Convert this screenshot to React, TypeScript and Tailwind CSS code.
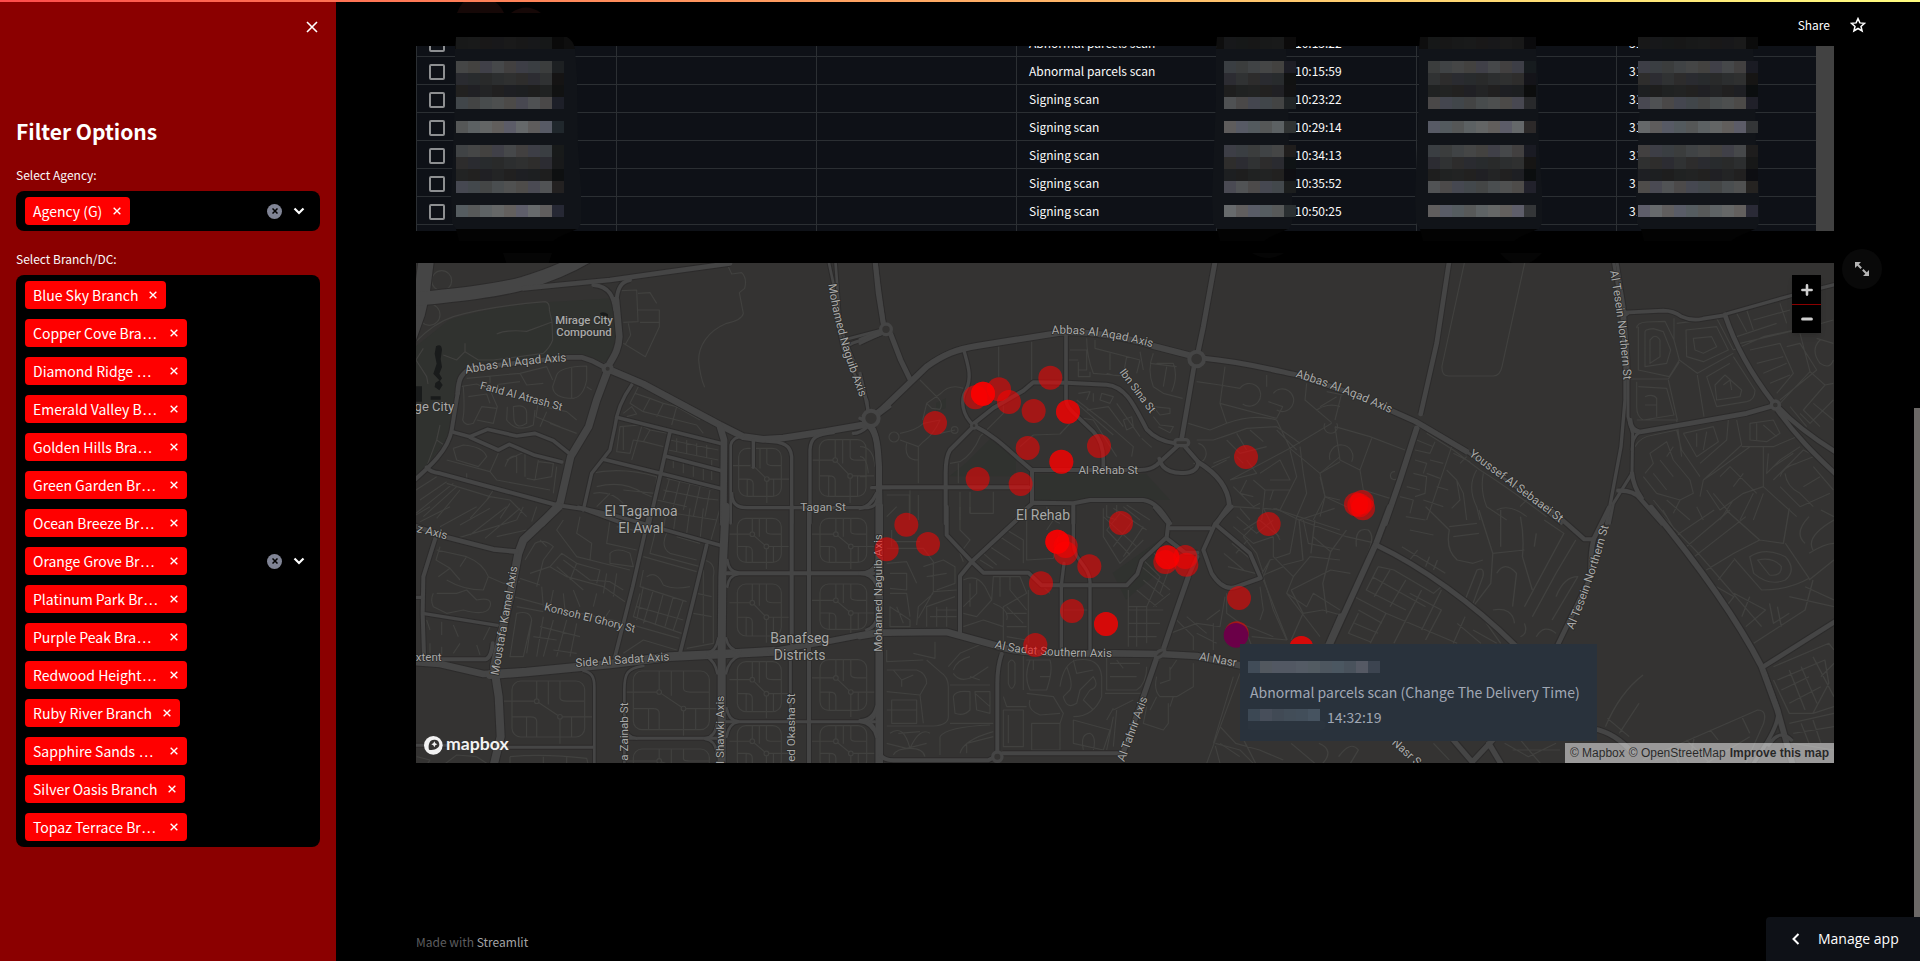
import React from "react";

const SANS = "font-['Noto_Sans_CJK_SC','Open_Sans',sans-serif]";

type Chip = { text: string; cut?: boolean };

const agencies: Chip[] = [{ text: "Agency (G)" }];

const branches: Chip[] = [
  { text: "Blue Sky Branch" },
  { text: "Copper Cove Bra", cut: true },
  { text: "Diamond Ridge ", cut: true },
  { text: "Emerald Valley B", cut: true },
  { text: "Golden Hills Bra", cut: true },
  { text: "Green Garden Br", cut: true },
  { text: "Ocean Breeze Br", cut: true },
  { text: "Orange Grove Br", cut: true },
  { text: "Platinum Park Br", cut: true },
  { text: "Purple Peak Bra", cut: true },
  { text: "Redwood Height", cut: true },
  { text: "Ruby River Branch" },
  { text: "Sapphire Sands ", cut: true },
  { text: "Silver Oasis Branch" },
  { text: "Topaz Terrace Br", cut: true },
];

function Cross({ className, width = 2 }: { className: string; width?: number }) {
  return (
    <svg viewBox="0 0 12 12" className={className} fill="none" stroke="currentColor" strokeWidth={width} aria-hidden="true">
      <path d="M1 1 L11 11 M11 1 L1 11" />
    </svg>
  );
}

function MultiSelect({ id, label, chips }: { id: string; label: string; chips: Chip[] }) {
  return (
    <div className="flex flex-col">
      <label htmlFor={id} className="h-[30px] text-xs leading-7 text-[#fafafa]">
        {label}
      </label>
      <div className="flex items-center rounded-lg bg-black py-1.5 pr-[13px] pl-[9px]">
        <div className="flex min-w-0 flex-1 flex-col items-start gap-2.5">
          {chips.map((chip) => (
            <span
              key={chip.text}
              className={
                "flex h-7 items-center justify-between rounded bg-[#ff0000] pr-2 pl-2 text-sm leading-7 text-white " +
                (chip.cut ? "w-[162px]" : "")
              }
            >
              <span className="whitespace-pre">
                {chip.text}
                {chip.cut && <span className="font-['Liberation_Sans',sans-serif] text-base leading-7">…</span>}
              </span>
              <button type="button" aria-label={"Remove " + chip.text} className="ml-2.5 flex size-2.5 items-center justify-center">
                <Cross className="size-2" width={2} />
              </button>
            </span>
          ))}
        </div>
        <input id={id} type="text" role="combobox" aria-expanded="false" className="h-7 w-4 bg-transparent outline-none" />
        <button type="button" aria-label="Clear all" className="flex size-[15px] items-center justify-center rounded-full bg-[#808495] text-black">
          <Cross className="size-1.5" width={3} />
        </button>
        <button type="button" aria-label="Open" className="ml-[9px] flex size-4 items-center justify-center text-white">
          <svg viewBox="0 0 12 8" className="h-2 w-3" fill="none" stroke="currentColor" strokeWidth="2.2" aria-hidden="true">
            <path d="M1.5 1.5 L6 6 L10.5 1.5" />
          </svg>
        </button>
      </div>
    </div>
  );
}

const scans = [
  { type: "Abnormal parcels scan", time: "10:13:22", code: "31" },
  { type: "Abnormal parcels scan", time: "10:15:59", code: "31" },
  { type: "Signing scan", time: "10:23:22", code: "31" },
  { type: "Signing scan", time: "10:29:14", code: "31" },
  { type: "Signing scan", time: "10:34:13", code: "31" },
  { type: "Signing scan", time: "10:35:52", code: "31" },
  { type: "Signing scan", time: "10:50:25", code: "31" },
];

const cell = "h-7 border-b border-l border-[#2b2f33] px-3 py-0 text-xs leading-6 text-[#fafafa]";

/* Brightness of each 12px band of a redacted column; 0 leaves the backing visible. */
const bands = [24, 0, 64, 44, 32, 72, 0, 92, 0, 64, 44, 32, 74, 0, 94, 0];
const shifts = [
  [0, 4, 6],
  [2, 0, 0],
  [6, 8, 8],
  [-4, -2, 8],
  [4, 2, 0],
  [-8, -2, 2],
  [0, 0, 10],
  [-6, -4, -4],
  [8, 10, 12],
];

function Mosaic({ x, cells, left, right, seed }: { x: number; cells: number; left: number; right: number; seed: number }) {
  const e = right;
  return (
    <g>
      <path
        fill="#111419"
        d={`M${left + 2} 12 L${left + 2} 60 L${left} 110 L${left - 2} 160 L${left - 1} 186 L${left + 3} 192 L${e - 3} 192 L${e} 186 L${e} 150 L${e - 3} 110 L${e - 4} 40 L${e - 6} 12Z`}
      />
      <path fill="#0e0e0e" d={`M${left + 3} 0 H${e - 14} Q${e - 8} 3 ${e - 6} 12 H${left + 2}Z`} />
      <path fill="#030303" d={`M${left + 3} 192 H${e - 4} L${e - 22} 200 L${e - 28} 204 H${left + 6}Z`} />
      {bands.map((level, row) =>
        level === 0
          ? null
          : Array.from({ length: cells + 1 }, (_, i) => {
              const s = shifts[(i * 2 + row + seed) % shifts.length];
              const k = (i === cells ? 0.45 : 1) * level;
              const w = row === 0 ? 0.2 : level / 80;
              const c = (n: number) => Math.round(Math.max(0, k + n * w));
              return <rect key={row + "-" + i} x={x + i * 12} y={row * 12} width="12" height="12" fill={`rgb(${c(s[0])},${c(s[1])},${c(s[2])})`} />;
            }),
      )}
    </g>
  );
}

function ScanTable() {
  return (
    <div className="relative">
      <div className="flex h-[185px] overflow-hidden bg-[#0e1117]">
        <table className="-mt-[17px] w-full table-fixed border-separate border-spacing-0 self-start">
          <tbody>
            {scans.map((s, i) => (
              <tr key={i}>
                <td className={cell}>
                  <input
                    type="checkbox"
                    aria-label={"Select row " + s.time}
                    className="mt-0.5 block size-4 appearance-none rounded-xs border-2 border-[#8d8f91]"
                  />
                </td>
                <td className={cell} />
                <td className={cell} />
                <td className={cell}>{s.type}</td>
                <td className={cell}>
                  <span className="pl-[66px]">{s.time}</span>
                </td>
                <td className={cell} />
                <td className={cell}>{s.code}</td>
              </tr>
            ))}
            <tr>
              {scans.map((s) => (
                <td key={s.time} className={cell} />
              ))}
            </tr>
          </tbody>
        </table>
        <div className="w-[18px] shrink-0 bg-[#424242]" />
      </div>
      <svg viewBox="0 0 1418 228" className="pointer-events-none absolute -top-[9px] left-0 h-[228px] w-full" preserveAspectRatio="xMinYMin meet" aria-hidden="true">
        <Mosaic x={40} cells={8} left={37} right={165} seed={0} />
        <Mosaic x={808} cells={5} left={798} right={876} seed={3} />
        <Mosaic x={1012} cells={8} left={1001} right={1126} seed={5} />
        <Mosaic x={1222} cells={9} left={1222} right={1343} seed={1} />
        <g fill="#050505">
          <path d="M87 216 H136 L132 228 H91Z" />
          <path d="M836 216 H868 Q852 226 836 216Z" />
          <path d="M1084 216 H1126 Q1104 240 1084 216Z" />
        </g>
      </svg>
    </div>
  );
}

/* ---------- Map ---------- */
/* Drawn at three units to the pixel, in six sheets: [width, path]. */
type Road = [number, string];

const roadsNW: Road[] = [
  [46, "M50 -10 L36 100 L22 160 L-10 250"],
  [40, "M10 118 C150 104 260 92 340 70 C420 46 480 20 530 -10"],
  [14, "M340 85 L600 60 L780 35 L960 10"],
  [12, "M550 75 C600 80 610 110 616 150 M660 60 C630 66 622 90 620 120"],
  [20, "M618 120 L628 230 C626 275 606 296 596 316"],
  [14, "M143 400 C146 360 150 345 180 325 L400 300 L470 292 L515 292 L545 302 L584 322"],
  [12, "M143 400 L125 510 C115 570 60 620 0 672"],
  [22, "M592 335 L560 420 L536 500 L482 590 L450 730 L395 790"],
  [20, "M605 332 L700 372 L930 495 L1000 530 L1060 538 L1120 534 L1250 514 L1362 494"],
  [8, "M1255 0 L1270 70 L1275 150 L1300 270 L1372 425 V450 M1276 0 L1282 80 L1290 200 L1330 300"],
  [14, "M1395 0 L1405 80 L1420 190"],
  [9, "M1308 238 L1408 212 M1310 262 Q1320 248 1360 240 L1412 222 M1400 455 L1440 425 M1402 468 L1440 440"],
  [10, "M665 375 C640 410 620 450 615 500 L600 570 L545 640 L520 750"],
  [11, "M620 472 L780 512 L930 550 M580 598 L750 640 L935 686 M765 588 L935 632 M780 515 L750 650 L718 790"],
  [20, "M930 500 L942 540 L940 790"],
  [8, "M962 790 V555 Q968 530 1000 530"],
  [10, "M1145 790 V590 C1142 555 1120 545 1070 543 M1200 790 V570 C1202 530 1220 524 1270 518"],
  [10, "M965 700 C966 735 985 743 1010 743 H1370 C1395 742 1402 730 1404 700"],
  [16, "M1385 500 C1400 520 1408 560 1410 790"],
  [10, "M1030 540 V622 M1385 683 H1440"],
  [11, "M128 516 L180 530 L232 508 L320 528 L375 520 L430 542 L475 578 M180 532 L265 570 L298 553 L375 586 L455 606"],
  [12, "M50 622 Q60 636 90 640 L440 735 L525 748 L640 790"],
];

const roadsSW: Road[] = [
  [24, "M446 -10 L340 90 L325 130 L300 260 L252 470 L266 560 L272 680 L250 770"],
  [14, "M10 46 L110 82 L250 118 L320 125"],
  [12, "M75 88 L40 200 L38 310 L42 435 M10 448 H226 Q244 444 248 400"],
  [10, "M10 262 H34 M38 310 L262 346"],
  [20, "M10 456 L90 462 L220 492 L350 486"],
  [26, "M240 494 L350 486 L600 462 L780 440 L940 432 L1090 424"],
  [18, "M1080 424 L1250 395 L1390 368 L1440 368"],
  [11, "M505 -8 L620 18 L780 64 L930 106 M718 10 L668 230 L615 440 M890 105 L850 270 L810 430"],
  [24, "M947 -10 L937 200 L935 430 V770"],
  [12, "M950 190 H1390 M1145 -10 V400 M1197 -10 V770"],
  [22, "M1408 -10 V770"],
  [9, "M1141 450 V632 M948 635 H1395"],
  [8, "M520 482 C545 488 553 500 553 530 V770 M700 468 C652 474 643 490 643 540 V770"],
  [9, "M650 685 H920 M290 712 H550 M10 706 H120"],
  [8, "M952 150 Q956 186 985 188 M952 230 Q956 196 985 192 M1400 150 Q1396 186 1370 188 M1400 230 Q1396 196 1370 192"],
  [8, "M948 385 Q955 420 990 425 M925 385 Q918 425 890 430 M948 490 Q956 450 990 436 M922 490 Q916 455 890 440"],
  [8, "M950 595 Q956 632 985 634 M950 680 Q956 640 985 636 M1400 595 Q1396 632 1370 634 M1400 680 Q1396 640 1370 636"],
  [8, "M920 645 Q914 682 885 685 M645 650 Q650 682 680 685 M920 725 Q914 690 885 687"],
];

const roadsN: Road[] = [
  [15, "M45 0 L55 100 L70 192 M92 222 L122 300 L152 362"],
  [9, "M0 238 L64 212 M0 250 Q20 240 66 220"],
  [18, "M52 462 L200 320 C250 284 290 268 350 258 L600 218 C690 212 800 232 880 258 L985 285"],
  [15, "M1066 0 L1030 200 L1014 276 M1030 295 C1150 306 1240 330 1320 347 L1450 392"],
  [14, "M1002 320 L985 420 L965 536"],
  [12, "M955 556 L890 615 Q870 630 840 630 H515 L480 600 C440 565 400 525 342 497"],
  [10, "M342 497 C306 466 300 420 318 390 C338 350 322 310 312 272"],
  [12, "M340 500 L270 570 Q257 590 257 640 V790"],
  [12, "M342 490 L400 444 L490 392 L520 367 L620 368 L740 374 C800 380 824 440 860 508 C880 530 910 545 945 550"],
  [11, "M618 225 V420 Q620 440 640 458 L700 515 Q730 545 730 600 V628"],
  [12, "M66 682 H505 M516 630 V728"],
  [12, "M500 745 L520 728 L640 730 L690 720 H850 C890 726 910 760 930 790 M640 730 V790"],
  [18, "M30 500 C50 520 54 560 57 620 V790"],
  [12, "M898 596 C906 636 950 642 980 638 C1010 634 1016 615 1014 605 L975 560"],
  [14, "M1014 606 C1080 646 1105 690 1108 735 L1070 790"],
  [10, "M0 475 L10 480 M22 500 Q0 520 -20 520 M0 745 Q30 742 50 700"],
  [10, "M0 340 L18 420 L24 448"],
];

const roadsS: Road[] = [
  [22, "M58 -10 V770"],
  [12, "M260 -10 V75 L335 155 L370 188 H505 L545 226 H800 L832 192 L845 152 L920 82 L925 40 L885 -8 M335 155 L472 28 M335 155 L300 198 V368"],
  [10, "M640 -10 V100 C640 150 690 170 690 215 V424 M612 160 L604 225 V420"],
  [20, "M0 378 L60 368 L260 366 L400 404 C470 430 540 432 760 430 L900 432 L1010 438 L1150 468"],
  [12, "M930 55 H1050 M1115 -10 L1065 42 L1030 120 L1055 190 Q1090 246 1130 230 L1202 204 L1170 130 L1065 42 M920 85 L975 128 L1012 128 M1012 140 L985 200"],
  [15, "M985 200 L950 300 L912 412"],
  [16, "M888 450 L850 560 L785 740"],
  [12, "M790 730 H428 M425 432 Q412 470 412 520 V728 M62 735 Q70 750 100 751 H385 L402 742"],
  [10, "M20 360 Q48 350 52 320 M0 190 Q35 190 50 160 M0 190 Q35 190 50 225 M0 632 Q40 630 50 590 M0 634 Q40 640 50 680"],
  [16, "M1442 318 L1405 402"],
];

const roadsNE: Road[] = [
  [14, "M388 0 L350 250 L302 462"],
  [16, "M200 446 L286 484 L440 575"],
  [9, "M440 575 L600 690 L724 790"],
  [17, "M290 505 L240 660 L195 790"],
  [10, "M880 0 L905 150 L915 300 V420 L903 560 L860 790"],
  [9, "M890 0 L912 140 L924 300 V470 L938 520 L936 640 L880 730 L868 790"],
  [14, "M930 480 Q932 512 960 516 L1110 490 L1280 460 L1360 437"],
  [11, "M912 158 L1030 152 Q1060 152 1085 170 Q1115 184 1150 176 L1212 166"],
  [10, "M1218 162 L1420 105 L1550 72"],
  [14, "M1215 165 C1250 270 1300 350 1358 425"],
  [14, "M1378 445 Q1440 510 1550 578 M1372 450 C1430 530 1480 580 1550 645"],
  [13, "M895 692 Q940 690 960 715 L1026 790 M936 640 Q940 680 965 715"],
  [8, "M960 516 Q936 530 936 570 M905 145 L920 158 M908 172 L925 160"],
];

const roadsSE: Road[] = [
  [15, "M430 -10 L395 100 L276 410"],
  [14, "M395 105 C510 170 640 280 745 404"],
  [12, "M830 -8 L922 88 H945 M985 -8 L945 88 Q936 130 938 200 L852 410"],
  [15, "M1090 -8 C1200 150 1300 310 1370 470 L1410 600 L1450 770"],
  [13, "M1372 472 L1565 328"],
  [10, "M1378 490 L1412 600 C1416 650 1370 720 1345 770 M1445 690 Q1415 654 1388 705"],
  [14, "M945 656 Q1000 668 1045 730 M590 690 L638 756 M690 690 L638 756 M680 700 L715 770"],
];

const lanesNW =
  "M18 245 Q70 190 130 170 Q230 140 405 125 Q420 128 418 150 L426 185 L428 240 Q420 262 400 280 L250 300 L205 300 L165 275 V250 M260 222 Q290 208 350 214 L426 186 M165 275 L140 300 L100 285 M955 20 L965 42 L995 38 Q1012 55 1004 85 L988 98 L1000 160 Q996 180 950 190 C890 215 866 260 866 300 Q870 350 884 382 " +
  "M635 92 L680 90 L684 185 L640 187 M684 100 L720 98 L740 130 M684 150 H748 V200 L706 290 L640 250 M690 187 H750 M655 190 L662 225 L645 255 " +
  "M440 345 Q450 320 530 318 V360 Q520 410 490 415 Q430 415 428 380Z M485 320 V415 M530 380 L545 390 M170 355 L330 340 L350 375 L400 370 M240 350 V370 M330 340 L410 320 L428 360 M260 374 L330 365 " +
  "M160 380 Q165 450 158 480 Q165 500 190 490 L215 440 L260 445 M175 410 L230 402 L240 430 M150 380 L200 372 L240 390 L262 440 L250 490 L200 480 M310 440 Q350 430 350 460 V490 Q320 510 312 480Z M292 440 L290 480 Q320 520 370 495 L375 450 M385 425 L378 470 L450 500 M400 440 L470 455 L500 480 M420 490 L500 520 M410 455 L390 500 " +
  "M640 460 L665 440 L680 462 L650 470 M675 400 L720 415 L700 452 M720 415 L760 430 L740 470 M760 430 L800 440 L785 495 M685 380 L660 430 L700 455 L860 495 L880 520 M800 440 L870 480 " +
  "M630 500 L690 495 L720 510 L700 545 L670 540 L660 580 L620 575Z M640 500 V570 M695 500 L665 600 M700 545 L760 560 M720 510 L775 520 M780 540 L925 570 M775 570 L925 600 M800 535 V575 M830 540 V580 M860 550 V585 M890 555 V595 M790 600 V625 M820 605 V640 M850 610 V650 M880 620 V660 M905 600 V660 " +
  "M540 640 Q640 620 740 650 L735 700 L640 690 M560 680 Q640 660 700 700 L725 710 M550 700 Q600 690 640 730 M560 740 L600 700 M770 655 L920 690 M760 690 L880 715 L925 720 M780 650 L760 720 M810 660 L790 740 M840 670 L820 750 M870 680 L850 770 M900 690 L885 770 M740 720 L830 740 M730 750 L920 780 " +
  "M130 565 L160 555 Q220 560 230 590 L205 620 L140 600Z M110 600 L240 635 L265 580 M290 600 L345 575 M285 620 Q300 580 320 590 V640 M345 575 V650 M385 600 L375 660 L350 655 M240 635 L260 660 L420 690 M385 605 L430 610 L425 650 L370 660 M440 620 L430 700 M170 640 V660 " +
  "M18 690 L80 650 M30 720 L110 665 M18 760 L130 670 M40 770 L140 680 M80 775 L150 690 M110 670 L240 710 L180 775 M240 710 L300 720 L350 770 M250 690 L230 720 M300 730 L270 775 M340 740 L320 780 M380 740 L365 785 " +
  "M40 265 L18 300 L50 350 L54 372 M90 495 L80 540 L50 620 M80 540 L110 560";

const lanesSW =
  "M0 25 L60 -10 M30 35 L120 -10 M90 50 L200 -10 M150 45 L240 -5 M180 75 L290 -10 M225 85 L330 -5 M140 85 L320 30 M260 80 L350 60 " +
  "M80 120 L170 140 Q220 160 235 200 L220 240 Q160 240 110 210 M90 110 L78 150 L120 175 L150 210 M170 140 L150 170 M70 250 Q60 270 70 290 L110 310 L160 300 Q230 320 240 290 Q250 260 200 270 L170 240 L140 250 L80 250 M60 140 L50 180 M120 175 L85 200 M235 200 L280 220 L330 215 " +
  "M50 330 L60 360 M95 335 V375 M130 345 L145 380 M60 400 V430 M95 410 V435 M150 400 L130 430 M200 405 L210 435 M240 350 L220 390 " +
  "M345 150 L375 100 Q400 85 430 110 L400 150 L380 230 M360 190 L420 170 L470 200 L580 230 L645 275 M420 170 L455 130 L500 160 L570 180 L560 220 M500 160 L480 210 M460 30 L440 60 L500 140 L660 180 M510 20 L500 70 L545 100 L540 150 M410 110 L390 90 M440 170 L520 240 M460 150 L540 210 L600 215 L640 240 M590 190 L580 250 M620 190 L610 260 M395 230 L400 290 M430 240 L420 290 M460 250 L465 300 M490 240 L510 290 M330 205 L390 225 M560 250 L550 290 M310 260 L420 290 L650 340 L808 385 M320 290 L400 305 M600 300 L580 330 " +
  "M600 30 L590 100 L680 120 M620 50 L690 65 M600 130 Q620 110 660 130 L670 170 L600 160Z M740 50 L720 130 L870 170 M770 70 Q750 110 780 130 L860 150 M800 80 L870 100 M700 140 L860 185 M710 200 Q740 180 760 225 Q790 240 840 230 M700 180 L690 230 L830 275 M690 250 L670 320 L815 370 M700 230 L680 330 M730 240 L700 340 M760 250 L735 345 M790 260 L765 350 M820 270 L790 360 M680 290 L820 330 M870 150 Q920 150 910 200 V400 L830 415 M860 250 L905 260 M850 310 L905 320 M880 180 V400 M640 430 L700 390 L800 420 " +
  "M320 310 Q360 300 365 330 L340 440 L300 440 Z M365 330 L350 430 M400 320 L380 440 M430 330 L400 440 M370 380 L440 390 M470 330 L440 440 M500 340 L480 440 M390 350 L510 380 M430 420 L500 430 " +
  "M930 -5 L900 100 M770 -5 L760 60 M800 -5 L790 65 M840 -5 L830 70 M880 -5 L870 90 M650 -5 L690 10 M20 740 L60 750 L50 765 M100 765 L140 735 L200 740 L230 760 M300 740 Q400 730 530 745 L535 765 M300 740 V765 M400 740 V765 M470 740 V765";

const lanesN =
  "M416 258 V350 M515 245 V360 M180 360 L235 415 Q250 430 240 448 L215 445 L200 430 L240 402 Q270 370 310 385 M200 430 L188 480 M120 520 Q170 510 190 490 L240 480 Q220 525 190 545 L175 560 L120 540 M140 550 Q130 600 175 600 M175 560 V670 M240 520 L285 510 M430 430 V460 L360 530 Q340 580 300 605 L270 610 M295 610 V670 M630 490 L600 522 L520 525 L480 560 " +
  "M630 270 H680 V330 H655 M655 300 H625 M680 235 Q680 290 700 340 L760 345 M705 240 V265 L840 300 M750 280 V330 M800 290 L790 345 Q770 350 740 340 M840 300 L830 340 M850 330 L840 275 M880 280 Q860 330 880 380 L910 400 L968 415 M890 310 H940 Q955 350 935 395 M920 320 L910 380 M870 310 L950 320 M655 305 V350 H690 V335 M655 400 L690 395 L680 420 M650 430 L760 525 M725 400 L760 410 L750 430 L720 420Z M700 400 L700 425 M680 450 L745 440 L790 500 M640 470 L700 480 L770 590 M650 420 L740 490 L820 560 L815 590 M790 480 L815 470 L820 500 L800 510Z M880 440 L930 445 V460 L900 465Z M880 470 L900 495 L940 500 L930 518 L895 500 M845 535 L875 562 M770 430 L840 530 " +
  "M1010 365 L1080 375 L1140 385 M1095 320 L1080 430 L1100 490 M1080 430 L1250 475 M1140 385 A34 34 0 1 1 1148 432 M1240 400 A34 34 0 1 1 1250 450 M1220 345 V380 M1340 370 L1335 420 L1415 488 M1370 450 A60 45 0 0 1 1440 440 M1250 475 L1268 440 L1225 425 M1250 480 L1290 565 L1380 640 M985 490 L1050 510 L1100 490 Q1180 460 1250 480 M1010 540 L1060 540 Q1120 520 1160 505 L1250 500 L1320 550 M1100 540 L1140 580 L1220 560 M1130 520 L1160 570 M1170 510 L1210 545 M1250 510 L1310 570 M1415 490 L1290 565 M1290 565 L1110 660 M1160 600 L1190 640 L1110 660 M1060 610 L1110 590 M1050 625 L1100 600 M1200 640 L1260 600 L1290 660 L1230 660 M1180 660 L1215 690 L1205 780 M1215 690 H1290 L1310 650 L1290 570 M1240 690 L1230 720 M1330 640 L1340 700 L1310 770 M1380 640 L1395 710 L1360 780 M1380 640 L1440 590 M1395 710 L1440 720 M1160 660 L1140 700 L1180 710 M1120 680 L1180 740 L1200 730 M1120 740 L1200 745 M1290 690 L1260 750 L1210 745 M1320 560 L1330 640 M1130 590 L1150 610 M1015 550 A30 30 0 0 1 1000 610 " +
  "M80 705 H148 V780 M150 690 V760 M175 705 V780 M300 695 V780 M330 695 V760 H400 V695 M740 735 V770 L770 780 M770 735 V760 M790 740 L840 780 M800 735 L870 780 M0 590 Q20 590 25 640 M0 560 Q40 560 45 620 M0 650 H20";

const lanesS =
  "M80 20 L110 -10 M100 95 H180 M80 115 L190 115 L220 155 V245 L175 325 M95 60 V110 M300 -10 V60 L330 90 L300 130 L310 155 M330 -10 V10 M420 80 L480 120 M440 60 L490 90 V160 M390 110 L450 150 M370 130 L410 165 M360 150 L400 175 M500 -10 V150 L580 145 L600 60 M560 -10 Q570 30 600 40 M580 30 L560 60 M730 -5 V80 L780 160 L850 90 M760 -5 L860 60 M730 20 L830 110 M740 60 L810 135 M780 10 L740 60 M820 30 L760 110 M850 50 L790 140 " +
  "M80 160 L140 155 L170 220 M90 190 L140 190 V240 L90 235 M90 250 H140 L150 320 M190 170 L250 150 L285 170 V220 L230 240 M200 200 L260 190 M220 245 L290 240 M90 290 L150 330 V350 L90 350Z M110 290 L130 340 M170 345 L175 290 L220 250 M200 350 V290 L285 260 M230 300 H290 M230 350 V290 M260 350 V290 M210 320 H290 " +
  "M310 210 Q350 190 375 230 L395 270 L350 320 L310 310 M330 220 V290 M350 210 V250 L310 290 M395 270 L400 200 L480 200 L500 250 L430 290 V400 M420 200 V260 M450 200 V240 L500 300 M440 290 L490 340 M310 350 L370 330 L430 350 M400 280 Q450 300 440 330 M440 310 H500 M440 350 H500 M440 380 L500 390 M505 240 V400 M545 225 L570 250 M610 300 H690 " +
  "M805 240 V410 M850 150 L900 200 L860 290 H805 M870 120 L930 170 L900 250 M845 170 L930 240 M880 290 L930 250 M830 240 L890 290 M850 210 L910 260 M805 300 H910 M805 340 H900 M805 380 H890 M830 290 V410 M860 290 V400 M930 370 L1010 340 L1080 350 L1095 260 M950 330 L1000 380 V420 M980 320 L1040 370 M1100 250 L1100 310 L1140 340 M1040 330 L1080 300 M1010 370 L1070 400 M1060 340 V420 " +
  "M80 420 V455 L190 450 M225 395 V445 L160 430 M80 480 H170 Q200 490 200 520 L180 555 L80 545 M100 480 L125 510 L160 495 M125 510 V530 M200 450 L240 485 Q265 500 265 530 V620 Q265 645 220 648 H80 M95 570 H170 V640 H95Z M180 555 L190 640 M80 600 H170 M265 470 L300 430 L370 400 M280 480 Q290 450 330 440 M280 490 Q300 520 340 500 L385 470 M330 500 L360 510 M270 525 H390 M280 560 Q285 540 330 545 V600 Q310 620 285 610Z M345 545 H390 V610 L350 600Z M345 550 L390 590 M270 640 H400 M240 680 Q260 650 390 645 M240 680 V735 M320 730 V700 L400 680 M300 730 Q310 690 400 665 " +
  "M90 670 Q130 640 150 715 Q180 650 210 670 M80 700 L140 715 L200 700 M100 735 Q110 715 150 715 Q190 715 195 740 M115 670 L180 665 M445 460 Q455 440 465 460 V520 Q455 550 445 520Z M430 600 H490 V710 H430Z M445 615 V700 M500 450 H570 Q580 480 560 540 H510 Q490 500 510 450Z M520 450 V480 M540 500 H570 M500 550 L580 560 L610 610 L600 640 M510 570 Q500 600 540 615 L600 610 M515 640 H600 V720 H515Z M430 560 L440 590 L500 590 M490 430 V540 " +
  "M600 530 Q610 460 650 450 Q720 440 725 500 V560 Q700 620 640 620 M620 470 Q640 520 630 540 L610 560 Q620 600 650 580 L660 540 L700 500 Q720 530 690 540 M640 450 L650 490 L700 480 M690 540 L670 570 L700 600 M740 440 V540 H830 Q860 520 860 470 M750 460 H840 M750 500 H830 M770 450 L790 475 M735 550 H850 M760 600 L820 570 M740 630 L760 595 M640 630 L750 660 L730 720 L640 700Z M670 720 Q660 670 690 670 Q710 680 700 720 M760 620 L740 720 M770 600 L760 710 " +
  "M890 500 Q880 540 900 560 H950 L1000 530 V460 M930 470 V510 L900 520 M950 450 L930 480 M860 590 L850 640 L910 660 L925 640 V580 M890 560 L870 600 M940 560 L930 590 M1120 500 L1060 700 M1140 490 L1040 760 M1066 708 L1080 760 M1066 700 L1140 720 M1140 720 L1180 760 " +
  "M1130 20 L1190 70 L1240 30 M1120 50 L1180 100 L1240 80 M1140 -5 L1170 30 M1150 80 L1190 130 L1210 190 M1180 50 L1150 80 M1200 200 L1230 150 L1290 130 M1240 80 L1240 140 L1300 200 L1350 140 L1440 150 M1230 150 L1210 200 L1240 300 L1280 390 M1300 200 L1280 250 L1380 380 M1280 250 L1340 290 L1360 250 L1440 300 M1200 230 L1210 300 L1200 330 M1140 340 L1240 380 M1160 370 L1180 420 M1210 -5 L1260 90 M1310 20 L1290 130 M1240 -5 L1440 60 M1330 30 L1345 100 L1440 120";

const lanesNE =
  "M435 0 L366 318 Q364 348 386 348 H520 Q540 348 546 320 L616 0 " +
  "M950 205 Q950 188 980 186 L1035 184 L1062 240 L1078 300 L1048 350 L955 330 V200 M975 215 Q975 208 1000 206 L1030 215 L1052 270 L1040 310 L975 320Z M1000 230 Q1010 225 1020 240 V290 L990 310 V240Z M925 357 H1045 L1078 306 M1062 175 V240 M1070 190 L1190 175 L1240 270 M1078 300 L1132 340 L1240 280 M1098 210 L1190 200 L1225 270 L1150 305 L1100 290Z M1120 235 L1175 230 L1190 260 L1150 280 L1125 270Z M1132 345 L1152 470 M1045 360 L1072 480 L950 480 M955 380 L1040 385 L1062 465 L970 480 Q950 470 950 440 V365 M975 410 Q1000 400 1010 415 V450 M975 435 H1010 V470 " +
  "M1240 290 L1305 390 Q1305 420 1280 425 L1190 440 L1160 350 L1230 310 M1185 375 L1215 345 L1265 390 L1260 410 L1190 420Z M1210 375 L1230 360 L1235 390 " +
  "M1240 270 L1330 230 L1470 200 M1250 160 L1280 215 M1280 150 L1300 210 M1250 230 L1370 190 M1300 180 L1410 150 M1380 130 L1400 190 M1260 250 L1430 210 L1490 200 M1290 270 L1380 250 L1420 340 L1370 400 M1310 310 L1390 290 M1330 340 L1400 310 M1350 370 L1410 345 M1400 260 L1440 250 L1490 330 L1380 420 M1440 220 L1470 335 L1515 375 L1540 370 M1470 335 L1380 430 M1500 240 Q1470 270 1500 310 Q1530 330 1540 300 M1490 235 L1540 250 M1470 120 V200 L1540 180 M1500 110 V190 M1515 375 L1450 450 L1500 500 M1480 430 L1540 480 M1440 460 L1470 490 L1540 420 M1410 440 L1460 500 " +
  "M945 560 Q960 530 1000 525 L1070 510 L1085 570 L1140 650 M1070 480 L1085 590 M1090 520 L1180 500 L1195 545 L1130 590 L1090 520 M1130 520 V560 M1160 515 L1150 570 M1225 480 L1220 540 L1140 610 M1250 480 L1265 555 L1150 660 L1140 710 M1290 490 L1360 480 L1380 520 L1340 545 L1290 540Z M1310 490 V540 M1330 495 L1370 530 M1265 560 H1360 L1430 530 M1330 560 V680 L1430 770 M1345 580 L1340 640 L1380 600 L1440 560 M1360 660 L1450 570 L1510 600 M1360 620 L1420 580 M1380 650 Q1390 620 1430 610 L1480 590 M1395 640 Q1400 680 1440 700 L1480 740 M1380 680 L1440 740 L1530 700 M1480 620 L1540 690 M1450 680 L1500 650 " +
  "M975 640 L1000 610 L990 580 L1040 545 L1060 600 L1110 660 L1120 700 L1080 720 L1010 700 L970 650 M1020 600 L1060 650 M1000 640 L1040 690 M1060 560 L1040 590 M1150 660 L1180 640 L1290 560 M1200 650 L1230 620 L1310 700 M1160 690 L1200 750 L1270 700 L1330 680 M1180 700 L1230 760 M1270 640 L1240 680 M1130 740 L1150 780 M1300 700 L1260 780 M1240 720 L1200 780 M1040 720 L1110 780 M1000 720 L1040 770 M1080 720 L1060 760 M1330 700 L1300 780 " +
  "M50 410 L0 440 M65 400 L45 480 M20 395 L70 405 M45 500 L150 530 L255 570 M45 500 L60 600 L120 630 L155 535 M30 600 A35 35 0 1 1 95 605 M0 640 L60 605 M120 630 L130 690 L210 715 M0 650 L15 710 L80 740 M15 710 L0 770 M15 490 A20 20 0 1 0 50 490 " +
  "M320 520 L400 570 L480 630 Q560 680 680 770 M290 540 L340 560 M345 545 L330 580 L285 570 M285 600 L320 610 L310 640 M280 640 L320 650 L315 700 L285 710 M260 680 L300 690 M240 710 L280 720 L270 760 M395 560 L320 780 M330 600 L370 610 M320 640 L360 655 M350 680 L385 690 M310 720 L370 740 M400 580 L450 605 M440 590 L420 610 M380 630 L410 660 L420 720 L395 745 M410 660 L430 700 L440 780 M470 630 Q440 680 470 740 L480 780 M490 640 Q480 690 500 740 L560 780 M530 750 Q570 730 620 770 M600 740 L620 720 M225 635 A12 12 0 1 0 235 650";

const lanesSE =
  "M520 -10 L580 60 Q570 120 600 150 L640 160 L665 150 M580 50 L650 40 M590 80 L655 70 M655 0 L690 130 L770 120 M690 130 L685 220 L640 290 M710 0 V110 M760 20 Q770 80 765 140 L790 240 M800 70 L795 110 M820 30 L870 70 L770 290 M900 90 L850 190 L790 320 M470 20 L520 30 M480 60 L540 75 M460 110 L570 190 M480 150 L500 120 M540 180 L550 150 M520 170 L530 140 M700 190 Q720 150 750 190 L740 290 M620 270 L650 180 Q670 170 665 200 L640 280 M850 260 Q870 200 905 200 L840 330 M770 340 Q780 370 760 380 M800 380 Q820 340 850 370 M690 300 Q740 290 745 340 " +
  "M400 170 L440 180 L540 250 L560 230 M400 170 L370 240 L470 300 M385 200 L520 290 M430 180 L390 260 M470 210 L430 290 M510 240 L470 330 M340 260 L420 310 L600 400 M420 310 L380 400 M350 310 L325 370 L380 395 M350 300 L410 340 M340 340 L400 370 M470 330 L440 400 M480 250 L560 300 L520 390 M560 240 L510 360 M620 320 L590 400 M600 340 L660 400 M650 300 L710 400 M640 360 L700 400 " +
  "M200 30 L210 150 L160 165 M200 30 L320 80 L395 100 M240 30 L235 80 L280 125 L320 60 M235 80 L230 130 M280 125 L260 220 L270 310 M160 170 L100 200 M180 240 L280 180 L330 190 M180 240 L210 310 L260 300 L320 320 M210 310 L180 390 M110 210 L170 390 M345 110 Q340 50 375 60 Q395 80 370 140 M80 380 L170 390 M140 -5 L200 30 L290 -5 M60 60 L100 30 L150 80 M10 130 L60 180 M30 100 L80 150 M20 170 L90 190 M70 90 L40 130 " +
  "M1100 -5 L1210 130 L1370 350 M1120 0 L1150 60 M1150 80 L1250 0 M1180 110 L1290 0 M1200 140 L1330 20 M1230 180 L1300 130 L1365 90 L1425 100 L1440 -5 M1300 150 L1260 210 M1365 90 L1280 0 M1300 145 L1370 240 Q1440 240 1490 205 L1430 100 M1340 140 Q1380 110 1430 140 Q1460 180 1430 210 Q1390 230 1350 190Z M1360 150 Q1400 140 1420 170 Q1420 200 1390 195Z M1490 210 L1553 150 M1480 100 Q1450 70 1490 20 M1490 130 Q1530 100 1553 100 M1500 120 Q1480 80 1553 30 M1520 0 L1553 20 M1240 220 L1300 260 L1280 290 M1300 250 L1380 300 L1330 350 M1340 260 L1320 320 M1390 280 L1400 340 L1440 310 M1410 290 L1420 350 M1440 260 L1553 290 M1480 230 L1553 270 M1500 210 L1480 300 L1350 400 " +
  "M1400 470 L1540 400 L1553 420 M1410 510 L1530 450 L1540 520 L1500 610 L1440 610 L1400 510 M1440 480 L1480 600 M1420 540 L1490 500 M1440 580 L1520 530 M1470 470 L1510 580 M1500 440 L1553 560 M1440 640 L1553 610 M1450 670 L1553 650 M1470 640 L1490 700 M1500 630 L1520 700 M1450 700 L1553 720 M1553 460 L1520 500 M1500 610 L1553 590 " +
  "M1070 495 Q1010 550 975 650 M1060 580 L1010 670 M980 625 L1035 680 M1070 750 L1360 600 Q1385 600 1375 640 L1330 760 M1180 690 L1240 760 M1240 660 L1260 690 M1320 620 L1340 670 M1100 750 L1150 740 M1200 680 L1190 740 M1140 710 L1160 760 M1230 760 L1340 680 M180 700 L240 760 M250 700 Q290 720 260 760 M300 740 Q330 690 350 720 L330 760 M0 650 L40 700 L100 720 L160 750 M60 690 L90 760 M0 700 L50 740 M540 700 L580 750 M720 700 L780 740 L850 700 M760 690 L810 760 M740 720 L860 720";

type Sheet = { x: number; y: number; sx?: number; roads: Road[]; lanes: string };

const sheets: Sheet[] = [
  { x: -18, y: -9, roads: roadsNW, lanes: lanesNW },
  { x: -18, y: 741, roads: roadsSW, lanes: lanesSW },
  { x: 1332, y: -9, roads: roadsN, lanes: lanesN },
  { x: 1332, y: 741, roads: roadsS, lanes: lanesS },
  { x: 2712, y: -9, roads: roadsNE, lanes: lanesNE },
  { x: 2412, y: 741, sx: 1.186, roads: roadsSE, lanes: lanesSE },
];

const place = (s: Sheet) => `translate(${s.x} ${s.y}) scale(${s.sx ?? 1} 1)`;

/* Housing quarters: x, y, width, height. */
const quarters = [
  [968, 556, 128, 144],
  [1210, 530, 140, 170],
  [964, 766, 132, 132],
  [1212, 766, 140, 132],
  [964, 963, 132, 156],
  [1212, 963, 140, 136],
  [964, 1196, 132, 150],
  [1212, 1190, 140, 152],
  [964, 1388, 132, 130],
  [1212, 1388, 140, 130],
  [652, 1224, 228, 176],
  [288, 1254, 218, 168],
  [652, 1458, 228, 100],
];

function Quarter({ x, y, w, h }: { x: number; y: number; w: number; h: number }) {
  const cx = x + w * 0.34;
  const cy = y + h * 0.36;
  const dx = x + w * 0.66;
  const dy = y + h * 0.64;
  return (
    <g>
      <rect x={x} y={y} width={w} height={h} rx="26" />
      <path
        d={`M${x - 24} ${cy} H${cx} L${dx} ${dy} H${x + w + 24} M${cx} ${y} V${cy} M${dx} ${dy} V${y + h + 20} M${dx} ${y} V${y + h * 0.3} Q${dx} ${cy} ${dx + 20} ${cy} H${x + w} M${cx} ${y + h} V${dy + 14} Q${cx} ${dy} ${cx - 18} ${dy} H${x} M${x + w * 0.2} ${y + h} V${dy} M${x + w * 0.5} ${y} V${y + h * 0.42} M${x + w * 0.82} ${dy} V${y + h}`}
      />
      <circle cx={cx} cy={cy} r="7" fill="#343332" />
      <circle cx={dx} cy={dy} r="7" fill="#343332" />
    </g>
  );
}

const rings: [number, number, number, number][] = [
  [575, 317, 12, 12],
  [1365, 466, 23, 12],
  [1410, 199, 16, 10],
  [2342, 288, 22, 12],
  [1744, 1481, 14, 10],
  [1674, 488, 8, 8],
  [4078, 426, 12, 10],
];

/* x, y, stacked count */
const points: [number, number, number][] = [
  [1903, 344, 1],
  [1749, 379, 1],
  [1678, 403, 1],
  [1701, 392, 3],
  [1779, 417, 1],
  [1853, 444, 1],
  [1956, 446, 2],
  [1557, 480, 1],
  [1835, 555, 1],
  [1936, 596, 2],
  [2049, 549, 1],
  [1685, 648, 1],
  [1814, 663, 1],
  [2490, 582, 1],
  [1471, 785, 1],
  [1412, 859, 1],
  [1536, 843, 1],
  [2115, 780, 1],
  [1924, 836, 3],
  [1949, 849, 1],
  [1949, 871, 1],
  [2020, 910, 1],
  [1875, 961, 1],
  [1968, 1044, 1],
  [2070, 1083, 2],
  [1858, 1146, 1],
  [2248, 897, 1],
  [2254, 883, 2],
  [2308, 882, 1],
  [2311, 905, 1],
  [2558, 783, 1],
  [2469, 1005, 1],
  [2462, 1111, 1],
  [2656, 1155, 2],
  [2820, 724, 1],
  [2838, 717, 1],
  [2841, 736, 1],
  [2830, 727, 1],
];

/* text, x, y, angle, size */
const labels: [string, number, number, number, number][] = [
  ["Mirage City", 504, 182, 0, 34],
  ["Compound", 504, 220, 0, 34],
  ["El Tagamoa", 675, 758, 0, 42],
  ["El Awal", 675, 810, 0, 42],
  ["Banafseg", 1151, 1139, 0, 42],
  ["Districts", 1151, 1191, 0, 42],
  ["El Rehab", 1881, 770, 0, 42],
  ["Tagan St", 1221, 744, 0, 35],
  ["Al Rehab St", 2077, 632, 0, 35],
  ["ge City", 55, 444, 0, 39],
  ["Farid Al Atrash St", 313, 410, 15, 33],
  ["z Axis", 46, 818, 14, 35],
  ["xtent", 38, 1194, 0, 35],
  ["Moustafa Kamel Axis", 276, 1075, -80, 35],
  ["Konsoh El Ghory St", 519, 1075, 14, 33],
  ["Side Al Sadat Axis", 620, 1202, -4, 35],
  ["a Zainab St", 636, 1406, -90, 35],
  ["l Shawki Axis", 925, 1400, -90, 35],
  ["ed Okasha St", 1136, 1394, -90, 35],
  ["Mohamed Naguib Axis", 1398, 990, -90, 35],
  ["Ibn Sina St", 2156, 390, 53, 33],
  ["Al Tahrir Axis", 2160, 1402, -70, 35],
  ["Al Nasr", 2404, 1201, 10, 35],
  ["Nasr S", 2964, 1476, 42, 35],
];

const curved: [string, string, number][] = [
  ["Abbas Al Aqad Axis", "M142 334 Q262 308 460 294", 35],
  ["Mohamed Naguib Axis", "M1236 58 Q1260 226 1334 408", 35],
  ["Abbas Al Aqad Axis", "M1898 214 Q2036 204 2218 256", 35],
  ["Abbas Al Aqad Axis", "M2630 340 Q2770 380 2930 454", 35],
  ["Youssef Al Sebaaei St", "M3149 570 Q3288 672 3440 786", 35],
  ["Al Tesein Northern St", "M3579 10 Q3610 176 3624 366", 35],
  ["Al Tesein Northern St", "M3466 1115 Q3532 965 3582 775", 35],
  ["Al Sadat Southern Axis", "M1716 1148 Q1808 1184 2108 1182", 35],
];

function MapDrawing() {
  return (
    <svg viewBox="0 0 4254 1500" preserveAspectRatio="xMidYMid slice" className="block h-[500px] w-full" role="img" aria-label="Map of scan locations">
      <rect width="4254" height="1500" fill="#343332" />
      <g fill="#30322f">
        <path d="M0 250 L100 170 Q230 130 390 118 L600 105 L605 220 L575 300 L520 283 L160 315 L130 370 L105 510 L0 650Z" />
        <path d="M1856 632 H2190 L2262 711 H1856Z" />
        <path d="M1560 420 l30 -15 v30 l-30 10Z M1650 600 L1730 520 L1800 570 V640 H1600Z" />
        <path d="M2090 930 L2230 830 L2260 900 L2130 1010Z" />
      </g>
      <g fill="#191b1b">
        <path d="M60 250 q16 -10 18 10 l-4 28 4 24 -8 20 8 14 -6 8 -20 -22 10 -30 -6 -30Z M58 360 l12 -8 10 14 -10 16 -14 -10Z M44 400 h30 v10 h-30Z M0 370 h18 v46 h-18Z M552 150 q12 -6 24 4 v8 h-20Z" />
      </g>
      <g fill="none" stroke="#41413f" strokeWidth="3.5" strokeLinejoin="round">
        {quarters.map(([x, y, w, h]) => (
          <Quarter key={x + "-" + y} x={x} y={y} w={w} h={h} />
        ))}
        {sheets.map((s, i) => (
          <path key={i} d={s.lanes} transform={place(s)} />
        ))}
        <circle cx="77" cy="53" r="30" />
        <circle cx="40" cy="155" r="32" />
        <circle cx="1434" cy="522" r="15" />
        <circle cx="1616" cy="501" r="10" />
      </g>
      <g fill="none" stroke="#2c2b2b" strokeLinejoin="round">
        {sheets.map((s, i) => (
          <g key={i} transform={place(s)}>
            {s.roads.map(([w, d], j) => (
              <path key={j} d={d} strokeWidth={w + 6} />
            ))}
          </g>
        ))}
      </g>
      <g fill="none" stroke="#454545" strokeLinejoin="round" strokeLinecap="round">
        {sheets.map((s, i) => (
          <g key={i} transform={place(s)}>
            {s.roads.map(([w, d], j) => (
              <path key={j} d={d} strokeWidth={w} />
            ))}
          </g>
        ))}
      </g>
      <g fill="#343332" stroke="#454545">
        {rings.map(([x, y, r, w]) => (
          <circle key={x} cx={x} cy={y} r={r} strokeWidth={w} />
        ))}
        <rect x="2276" y="530" width="42" height="18" rx="9" strokeWidth="10" />
        <ellipse cx="2232" cy="1172" rx="17" ry="8" transform="rotate(-35 2232 1172)" strokeWidth="10" />
      </g>
      <g
        className="font-['Roboto',sans-serif]"
        fill="#a9a9a8"
        stroke="#2b2b2a"
        strokeWidth="5"
        paintOrder="stroke"
        strokeLinejoin="round"
        textAnchor="middle"
      >
        {labels.map(([text, x, y, a, size]) => (
          <text key={text + y} x={x} y={y} fontSize={size} fontWeight={size === 34 ? 500 : 400} transform={a ? `rotate(${a} ${x} ${y})` : undefined}>
            {text}
          </text>
        ))}
        {curved.map(([text, d, size], i) => (
          <React.Fragment key={i}>
            <path id={"street-" + i} d={d} fill="none" stroke="none" />
            <text fontSize={size}>
              <textPath href={"#street-" + i} startOffset="50%">
                {text}
              </textPath>
            </text>
          </React.Fragment>
        ))}
      </g>
      <g fill="#ff0000" fillOpacity="0.55">
        {points.flatMap(([x, y, n]) => Array.from({ length: n }, (_, i) => <circle key={x + "-" + y + "-" + i} cx={x} cy={y} r="36" />))}
      </g>
      <circle cx="2460" cy="1117" r="37" fill="#6b0048" />
      <g transform="translate(52 1447)">
        <circle r="28" fill="#f2f2f2" />
        <path d="M-13 13 C-16 -2 -12 -17 3 -17 A14 14 0 0 1 11 9 C5 14 -5 15 -13 13Z" fill="#343332" />
        <path d="M3 -12 L6 -6 L12 -3 L6 0 L3 6 L0 0 L-6 -3 L0 -6Z" fill="#f2f2f2" />
        <text x="38" y="15" fontSize="53" fontWeight="700" fill="#f2f2f2" className="font-['Lato',sans-serif]">
          mapbox
        </text>
      </g>
    </svg>
  );
}

function MapPanel() {
  return (
    <section className="relative mt-8 overflow-hidden">
      <MapDrawing />
      <div className="absolute top-3 right-[13px] flex flex-col bg-black shadow-md">
        <button type="button" aria-label="Zoom in" className="flex size-[29px] items-center justify-center text-[#cfcfcf]">
          <svg viewBox="0 0 12 12" className="size-3" stroke="currentColor" strokeWidth="2.6" strokeLinecap="round" aria-hidden="true">
            <path d="M6 1.4 V10.6 M1.4 6 H10.6" />
          </svg>
        </button>
        <button type="button" aria-label="Zoom out" className="flex size-[29px] items-center justify-center border-t border-[#8b0000] text-[#cfcfcf]">
          <svg viewBox="0 0 12 12" className="size-3" stroke="currentColor" strokeWidth="3" strokeLinecap="round" aria-hidden="true">
            <path d="M1.6 6 H10.4" />
          </svg>
        </button>
      </div>
      <div role="tooltip" className="absolute top-[381px] left-[824px] flex h-[97px] w-[357px] flex-col bg-[#29323c] px-2.5 pt-[11px] text-sm leading-[25px] text-[#a0a7b4]">
        <svg viewBox="0 0 132 25" className="-ml-0.5 h-[25px] w-[132px]" aria-hidden="true">
          {["#414c58", "#52585f", "#525863", "#525863", "#545b65", "#525b62", "#4d565f", "#4b5761", "#49525c", "#555964", "#3c4450"].map((c, i) => (
            <rect key={i} x={i * 12} y="6" width="12" height="12" fill={c} />
          ))}
        </svg>
        <span className="whitespace-nowrap">Abnormal parcels scan (Change The Delivery Time)</span>
        <span className="flex">
          <svg viewBox="0 0 79 25" className="-ml-0.5 h-[25px] w-[79px]" aria-hidden="true">
            <rect x="-2" y="15" width="80" height="10" rx="5" fill="#2b343e" />
            {["#3c4854", "#474e5a", "#414a55", "#424d58", "#424e5a", "#465360"].map((c, i) => (
              <rect key={i} x={i * 12} y="4" width="12" height="12" fill={c} />
            ))}
          </svg>
          14:32:19
        </span>
      </div>
      <div className="absolute right-0 bottom-0 flex h-5 items-center gap-1 bg-white/50 px-[5px] font-['Liberation_Sans',sans-serif] text-xs leading-5 text-black/75">
        <a href="#mapbox">© Mapbox</a>
        <a href="#osm">© OpenStreetMap</a>
        <a href="#improve" className="font-bold">
          Improve this map
        </a>
      </div>
    </section>
  );
}

export default function App() {
  return (
    <div className={"relative flex h-screen overflow-hidden bg-black text-white " + SANS}>
      <div className="absolute inset-x-0 top-0 z-10 h-0.5 bg-linear-to-r from-[#ff4b4b] to-[#fffd80]" />

      <aside className="flex w-[336px] shrink-0 flex-col bg-[#8b0000] px-4">
        <div className="flex h-[113px] justify-end pt-[21px] pr-0.5">
          <button type="button" aria-label="Close sidebar" className="flex size-3 items-center justify-center">
            <Cross className="size-3" width={1.6} />
          </button>
        </div>
        <h2 className="mb-3 text-[21px] leading-9 font-bold">Filter Options</h2>
        <div className="flex flex-col gap-3.5">
          <MultiSelect id="agency" label="Select Agency:" chips={agencies} />
          <MultiSelect id="branch" label="Select Branch/DC:" chips={branches} />
        </div>
      </aside>

      <main className="flex min-w-0 flex-1 flex-col">
        <header className="flex h-[46px] shrink-0 items-center justify-end gap-5 pt-1 pr-[54px]">
          <button type="button" className="text-xs leading-6">
            Share
          </button>
          <button type="button" aria-label="Favorite">
            <svg viewBox="0 0 16 16" className="size-4" fill="none" stroke="currentColor" strokeWidth="1.5" aria-hidden="true">
              <path d="M8 1.6 L9.9 5.9 L14.5 6.3 L11 9.4 L12.1 14 L8 11.5 L3.9 14 L5 9.4 L1.5 6.3 L6.1 5.9Z" />
            </svg>
          </button>
        </header>
        <div className="flex flex-1 flex-col pr-[86px] pl-20">
          <ScanTable />
          <MapPanel />
          <footer className="mt-auto pb-[7px] text-xs leading-6 text-[#5d5d5f]">
            Made with{" "}
            <a href="#streamlit" className="text-[#a3a3a5]">
              Streamlit
            </a>
          </footer>
        </div>
      </main>

      <svg viewBox="0 0 100 13" className="pointer-events-none absolute top-0 left-[450px] h-[13px] w-[100px]" fill="#160807" aria-hidden="true">
        <path d="M7 13 Q12 0 18 0 H42 Q50 4 54 13Z M61 13 Q76 2 91 13Z" />
      </svg>
      <button type="button" aria-label="View fullscreen" className="absolute top-[249px] right-[38px] flex size-10 items-center justify-center rounded-full bg-[#090909] text-[#b4b4b4]">
        <svg viewBox="0 0 16 16" className="size-4" fill="currentColor" stroke="currentColor" aria-hidden="true">
          <path d="M1 1 H7 L1 7Z M15 15 H9 L15 9Z" stroke="none" />
          <path d="M3 3 L7.2 7.2 M13 13 L8.8 8.8" strokeWidth="2" />
        </svg>
      </button>
      <div className="absolute top-[408px] right-0 bottom-0 w-1.5 bg-[#6b6866]" />
      <button
        type="button"
        className="absolute right-0 bottom-0 flex h-11 w-[154px] items-center gap-[18px] rounded-tl bg-[#0e1117] pl-[26px] font-['Open_Sans',sans-serif] text-sm"
      >
        <svg viewBox="0 0 8 12" className="h-3 w-2" fill="none" stroke="currentColor" strokeWidth="2" aria-hidden="true">
          <path d="M6.5 1 L1.5 6 L6.5 11" />
        </svg>
        Manage app
      </button>
    </div>
  );
}
